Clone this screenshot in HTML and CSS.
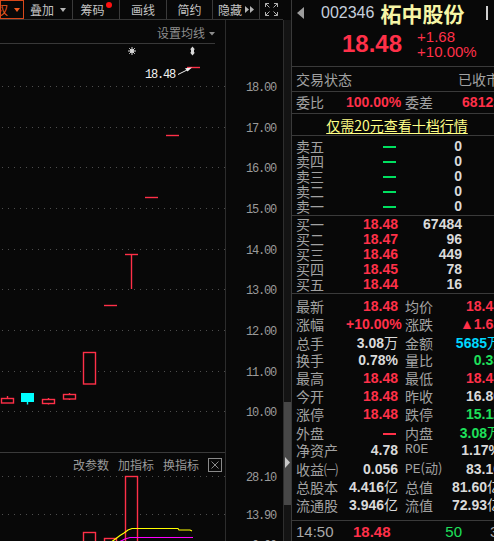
FILE: index.html
```html
<!DOCTYPE html>
<html lang="zh-CN">
<head>
<meta charset="utf-8">
<title>柘中股份 002346</title>
<link rel="stylesheet" href="styles.css">
</head>
<body>
<div class="app">
  <section class="left">
    <nav class="toolbar">
      <div class="btn btn-active"><span class="btn-txt">复权</span><span class="caret caret-or"></span></div>
      <div class="btn b-overlay"><span>叠加</span><span class="caret"></span></div>
      <div class="btn b-chip"><span>筹码</span><span class="dot"></span></div>
      <div class="btn b-draw"><span>画线</span></div>
      <div class="btn b-simple"><span>简约</span></div>
      <div class="btn b-hide"><span>隐藏</span>
        <svg class="ff" width="9" height="7" viewBox="0 0 9 7"><polygon points="0,0 4,3.5 0,7" fill="#b4b4b4"/><polygon points="5,0 9,3.5 5,7" fill="#b4b4b4"/></svg>
      </div>
      <div class="btn b-full">
        <svg width="13" height="13" viewBox="0 0 13 13" fill="none" stroke="#b0b0b0" stroke-width="1">
          <path d="M0.5 4V0.5H4M0.5 0.5L4.5 4.5"/>
          <path d="M9 0.5H12.5V4M12.5 0.5L8.5 4.5"/>
          <path d="M0.5 9V12.5H4M0.5 12.5L4.5 8.5"/>
          <path d="M9 12.5H12.5V9M12.5 12.5L8.5 8.5"/>
        </svg>
      </div>
    </nav>
    <div class="chartrow">
      <svg class="chart" width="283" height="521" viewBox="0 20 283 521">
        <g class="hdr">
          <line x1="0" y1="43.5" x2="215" y2="43.5" stroke="#383838"/>
          <text x="157" y="37.5" class="t-set">设置均线</text>
          <polygon points="209,32 215,32 212,35.5" fill="#8c8c8c"/>
        </g>
        <line x1="225.5" y1="20" x2="225.5" y2="541" stroke="#2c2c2c"/>
        <g class="grid" stroke="#4e4e4e" stroke-dasharray="1 5">
          <line x1="2" y1="86.5" x2="228" y2="86.5"/>
          <line x1="2" y1="127.5" x2="228" y2="127.5"/>
          <line x1="2" y1="167.5" x2="228" y2="167.5"/>
          <line x1="2" y1="208.5" x2="228" y2="208.5"/>
          <line x1="2" y1="249.5" x2="228" y2="249.5"/>
          <line x1="2" y1="289.5" x2="228" y2="289.5"/>
          <line x1="2" y1="330.5" x2="228" y2="330.5"/>
          <line x1="2" y1="371.5" x2="228" y2="371.5"/>
          <line x1="2" y1="411.5" x2="228" y2="411.5"/>
          <line x1="2" y1="476.5" x2="228" y2="476.5"/>
          <line x1="2" y1="514.5" x2="228" y2="514.5"/>
        </g>
        <g class="axis">
          <text x="276" y="90.5">18.00</text>
          <text x="276" y="131.5">17.00</text>
          <text x="276" y="171.5">16.00</text>
          <text x="276" y="212.5">15.00</text>
          <text x="276" y="253.5">14.00</text>
          <text x="276" y="293.5">13.00</text>
          <text x="276" y="334.5">12.00</text>
          <text x="276" y="375.5">11.00</text>
          <text x="276" y="415.5">10.00</text>
          <text x="276" y="480.5">28.10</text>
          <text x="276" y="518.5">13.90</text>
          <text x="276" y="548.5">0.00</text>
        </g>
        <g class="marks" fill="#d8d8d8" stroke="#d8d8d8">
          <circle cx="132" cy="51" r="2" stroke="none"/>
          <path d="M132 47V55M128 51H136M129.2 48.2L134.8 53.8M134.8 48.2L129.2 53.8" stroke-width="1"/>
          <polygon points="192.5,46.5 195,49.5 194,49.5 194,52.5 195,52.5 192.5,55.5 190,52.5 191,52.5 191,49.5 190,49.5" stroke="none"/>
        </g>
        <g class="candles" stroke="#ff3048" stroke-width="1.4" fill="#080808">
          <line x1="7.5" y1="396" x2="7.5" y2="398"/>
          <rect x="1.5" y="398.5" width="12" height="4.5"/>
          <line x1="27.5" y1="401" x2="27.5" y2="404.5" stroke="#00ffff"/>
          <rect x="21" y="393" width="13" height="9" fill="#00ffff" stroke="none"/>
          <line x1="48.5" y1="398" x2="48.5" y2="404.5"/>
          <rect x="42.5" y="399.5" width="12" height="4"/>
          <line x1="69.5" y1="393" x2="69.5" y2="400"/>
          <rect x="63.5" y="394.5" width="12" height="4.5"/>
          <rect x="83.5" y="352.5" width="12" height="31.5"/>
          <line x1="104" y1="305.5" x2="117" y2="305.5"/>
          <line x1="125" y1="254.5" x2="138" y2="254.5"/>
          <line x1="131.5" y1="254.5" x2="131.5" y2="289"/>
          <line x1="145" y1="197.5" x2="158" y2="197.5"/>
          <line x1="166" y1="135.5" x2="179" y2="135.5"/>
          <line x1="187" y1="67.5" x2="200" y2="67.5"/>
        </g>
        <g class="note">
          <text x="145" y="77.5" class="t-note">18.48</text>
          <line x1="178" y1="74.5" x2="189" y2="69" stroke="#f0f0f0" stroke-width="1"/>
          <polygon points="192,67.5 185,68.2 187.5,71.5" fill="#f0f0f0"/>
        </g>
        <line x1="0" y1="452.5" x2="225" y2="452.5" stroke="#3a3a3a"/>
        <g class="ind">
          <text x="73" y="469.5" class="t-ind">改参数</text>
          <text x="118" y="469.5" class="t-ind">加指标</text>
          <text x="163" y="469.5" class="t-ind">换指标</text>
          <rect x="208.5" y="458.5" width="13" height="13" fill="none" stroke="#8a8a8a"/>
          <path d="M211.5 461.5L218.5 468.5M218.5 461.5L211.5 468.5" stroke="#8a8a8a"/>
        </g>
        <g class="vol" stroke="#ff3048" stroke-width="1.4" fill="#080808">
          <rect x="125.5" y="476.5" width="12" height="80"/>
          <rect x="83.5" y="532.5" width="12" height="20"/>
          <rect x="104.5" y="538.5" width="12" height="20"/>
        </g>
        <polyline points="112,541.5 116,538.5 120,535.5 124,533 128,530 132,528.5 178,528.5 179,530 190,530 192,531" fill="none" stroke="#ffff00" stroke-width="1.2"/>
        <polyline points="120,541.5 125,539 130,537.5 193,537.5" fill="none" stroke="#ff00ff" stroke-width="1.2"/>
      </svg>
      <div class="scroll">
        <div class="thumb">
          <svg class="thumb-arrow" width="5" height="11" viewBox="0 0 5 11"><polygon points="0,0 5,5.5 0,11" fill="#c8c8c8"/></svg>
        </div>
      </div>
    </div>
  </section>

  <section class="panel">
    <header class="ph">
      <div class="ph-top">
        <svg class="back" width="7" height="12" viewBox="0 0 7 12"><polygon points="7,0 7,12 0,6" fill="#9c9c9c"/></svg>
        <span class="code">002346</span>
        <span class="name">柘中股份</span>
        <span class="edge"></span>
      </div>
      <div class="ph-price">
        <span class="big up">18.48</span>
        <div class="chg up"><span>+1.68</span><span>+10.00%</span></div>
      </div>
    </header>

    <div class="status-row"><span class="lab">交易状态</span><span class="lab status">已收市</span></div>

    <div class="g4 wb-row">
      <span class="lab">委比</span><span class="num up">100.00%</span>
      <span class="lab l2">委差</span><span class="num up">68123</span>
    </div>

    <div class="promo"><span class="promo-link">仅需20元查看十档行情</span></div>

    <div class="book sell">
      <div class="brow"><span class="lab">卖五</span><span class="num"><i class="dash"></i></span><span class="num wt">0</span></div>
      <div class="brow"><span class="lab">卖四</span><span class="num"><i class="dash"></i></span><span class="num wt">0</span></div>
      <div class="brow"><span class="lab">卖三</span><span class="num"><i class="dash"></i></span><span class="num wt">0</span></div>
      <div class="brow"><span class="lab">卖二</span><span class="num"><i class="dash"></i></span><span class="num wt">0</span></div>
      <div class="brow"><span class="lab">卖一</span><span class="num"><i class="dash"></i></span><span class="num wt">0</span></div>
    </div>

    <div class="book buy">
      <div class="brow"><span class="lab">买一</span><span class="num up">18.48</span><span class="num wt">67484</span></div>
      <div class="brow"><span class="lab">买二</span><span class="num up">18.47</span><span class="num wt">96</span></div>
      <div class="brow"><span class="lab">买三</span><span class="num up">18.46</span><span class="num wt">449</span></div>
      <div class="brow"><span class="lab">买四</span><span class="num up">18.45</span><span class="num wt">78</span></div>
      <div class="brow"><span class="lab">买五</span><span class="num up">18.44</span><span class="num wt">16</span></div>
    </div>

    <div class="info">
      <div class="g4 irow"><span class="lab">最新</span><span class="num up">18.48</span><span class="lab l2">均价</span><span class="num up">18.48</span></div>
      <div class="g4 irow"><span class="lab">涨幅</span><span class="num up">+10.00%</span><span class="lab l2">涨跌</span><span class="num up">▲1.68</span></div>
      <div class="g4 irow"><span class="lab">总手</span><span class="num wt">3.08<span class="cjk">万</span></span><span class="lab l2">金额</span><span class="num cy">5685<span class="cjk">万</span></span></div>
      <div class="g4 irow"><span class="lab">换手</span><span class="num wt">0.78%</span><span class="lab l2">量比</span><span class="num dn">0.35</span></div>
      <div class="g4 irow"><span class="lab">最高</span><span class="num up">18.48</span><span class="lab l2">最低</span><span class="num up">18.48</span></div>
      <div class="g4 irow"><span class="lab">今开</span><span class="num up">18.48</span><span class="lab l2">昨收</span><span class="num wt">16.80</span></div>
      <div class="g4 irow"><span class="lab">涨停</span><span class="num up">18.48</span><span class="lab l2">跌停</span><span class="num dn">15.12</span></div>
      <div class="g4 irow"><span class="lab">外盘</span><span class="num"><i class="dash red"></i></span><span class="lab l2">内盘</span><span class="num dn">3.08<span class="cjk">万</span></span></div>
      <div class="g4 irow"><span class="lab">净资产</span><span class="num wt">4.78</span><span class="mono l2">ROE</span><span class="num wt">1.17%</span></div>
      <div class="g4 irow"><span class="lab">收益㈠</span><span class="num wt">0.056</span><span class="mono l2">PE<span class="cjk-s">(动)</span></span><span class="num wt">83.16</span></div>
      <div class="g4 irow"><span class="lab">总股本</span><span class="num wt">4.416<span class="cjk">亿</span></span><span class="lab l2">总值</span><span class="num wt">81.60<span class="cjk">亿</span></span></div>
      <div class="g4 irow"><span class="lab">流通股</span><span class="num wt">3.946<span class="cjk">亿</span></span><span class="lab l2">流值</span><span class="num wt">72.93<span class="cjk">亿</span></span></div>
    </div>

    <div class="tick">
      <span class="t-time">14:50</span><span class="t-price up">18.48</span><span class="t-vol dn">50</span><span class="t-n">3</span>
    </div>
  </section>
</div>
</body>
</html>
```

FILE: styles.css
```css
html, body {
  margin: 0;
  padding: 0;
  overflow: hidden;
  background: #080808;
}
body {
  width: 494px;
  height: 541px;
  font-family: "Noto Sans CJK SC", "Liberation Sans", sans-serif;
  color: #a4a4a4;
}
.app {
  display: flex;
  width: 503px;
  height: 541px;
}

/* ---------- left: chart ---------- */
.left {
  flex: none;
  width: 291px;
  display: flex;
  flex-direction: column;
}
.toolbar {
  display: flex;
  width: 283px;
  height: 19px;
  border-bottom: 1px solid #363636;
}
.btn {
  box-sizing: border-box;
  height: 19px;
  display: flex;
  align-items: center;
  justify-content: center;
  border-right: 1px solid #3a3a3a;
  color: #c4c4c4;
  font-size: 12px;
  line-height: 19px;
  white-space: nowrap;
  flex: none;
}
.caret {
  width: 0;
  height: 0;
  border-left: 3px solid transparent;
  border-right: 3px solid transparent;
  border-top: 4px solid #b4b4b4;
  margin-left: 6px;
}
.btn-active {
  width: 24px;
  justify-content: flex-end;
  overflow: hidden;
  border: 1px solid #d8481a;
  padding-right: 3px;
  color: #f25a20;
}
.btn-active .caret { margin-left: 6px; }
.caret-or { border-top-color: #f25a20; }
.b-overlay { width: 49px; }
.b-chip { width: 47px; align-items: center; }
.b-draw { width: 47px; }
.b-simple { width: 46px; }
.b-hide { width: 47px; }
.b-full { width: 23px; border-right: none; }
.dot {
  width: 6px;
  height: 6px;
  border-radius: 50%;
  background: #ff1010;
  margin-left: 1px;
  align-self: flex-start;
  margin-top: 2px;
}
.ff { margin-left: 3px; }

.chartrow {
  display: flex;
  flex: 1;
}
.chart {
  display: block;
  flex: none;
}
.chart text {
  font-family: "Liberation Mono", monospace;
  font-size: 12px;
  letter-spacing: -1.2px;
}
.axis text {
  fill: #9a9a9a;
  text-anchor: end;
}
.chart .t-set, .chart .t-ind {
  font-family: "Noto Sans CJK SC", sans-serif;
  font-size: 12px;
  letter-spacing: 0;
  fill: #8e8e8e;
}
.chart .t-ind { fill: #9a9a9a; }
.chart .t-note { fill: #f2f2f2; }

.scroll {
  box-sizing: border-box;
  width: 8px;
  background: #141414;
  border-left: 1px solid #2e2e2e;
  display: flex;
  flex-direction: column;
}
.thumb {
  margin-top: 382px;
  height: 103px;
  background: #474747;
  display: flex;
  align-items: center;
  justify-content: center;
}
.thumb-arrow { display: block; margin-top: 18px; }

/* ---------- right: quote panel ---------- */
.panel {
  box-sizing: border-box;
  flex: none;
  width: 212px;
  border-left: 1px solid #3a3a3a;
  display: flex;
  flex-direction: column;
}
.up { color: #ff3048; }
.dn { color: #1ee05a; }
.wt { color: #dadada; }
.cy { color: #00d8ff; }

.ph {
  height: 66px;
  border-bottom: 1px solid #3a3a3a;
  display: flex;
  flex-direction: column;
}
.ph-top {
  height: 26px;
  display: flex;
  align-items: center;
  white-space: nowrap;
}
.back { margin-left: 5px; flex: none; }
.code {
  margin-left: 17px;
  font-family: "Liberation Sans", sans-serif;
  font-size: 16px;
  color: #c4cedc;
}
.name {
  margin-left: 6px;
  font-size: 21px;
  font-weight: bold;
  color: #f6f6a6;
  line-height: 26px;
}
.edge {
  width: 2px;
  height: 14px;
  background: #cfcfcf;
  margin-left: 22px;
}
.ph-price {
  height: 40px;
  display: flex;
  align-items: center;
}
.big {
  margin-left: 50px;
  font-family: "Liberation Sans", sans-serif;
  font-weight: bold;
  font-size: 24px;
  line-height: 24px;
  margin-top: -4px;
}
.chg {
  margin-left: 15px;
  display: flex;
  flex-direction: column;
  font-family: "Liberation Sans", sans-serif;
  font-size: 15px;
  line-height: 15px;
  margin-top: -4px;
}

.lab {
  font-size: 14px;
  color: #a2a2a2;
  white-space: nowrap;
}
.num {
  font-family: "Liberation Sans", sans-serif;
  font-weight: bold;
  font-size: 14px;
  text-align: right;
  white-space: nowrap;
}
.cjk {
  font-family: "Noto Sans CJK SC", sans-serif;
  font-weight: normal;
}
.mono {
  font-family: "Liberation Mono", monospace;
  font-size: 13px;
  color: #a2a2a2;
  white-space: nowrap;
}
.cjk-s {
  font-family: "Noto Sans CJK SC", sans-serif;
  font-size: 13px;
}

.status-row {
  height: 24px;
  line-height: 24px;
  display: flex;
  justify-content: space-between;
  padding: 0 3px 0 4px;
  border-bottom: 1px solid #3a3a3a;
}

.g4 {
  display: grid;
  grid-template-columns: 50px 52px 53px 50px;
  padding-left: 4px;
  align-items: center;
}
.g4 .l2 { padding-left: 7px; }

.wb-row {
  height: 21px;
  line-height: 21px;
  border-bottom: 1px solid #3a3a3a;
}

.promo {
  height: 21px;
  line-height: 21px;
  border-bottom: 1px solid #3a3a3a;
  text-align: center;
  padding-right: 1px;
}
.promo-link {
  font-size: 14px;
  color: #ffff86;
  text-decoration: underline;
  text-underline-offset: 2px;
}

.book {
  border-bottom: 1px solid #3a3a3a;
}
.sell { padding: 3px 0 1px; }
.buy { padding: 1px 0 1px; }
.brow {
  display: grid;
  grid-template-columns: 50px 52px 64px;
  padding-left: 4px;
  height: 15px;
  line-height: 15px;
  align-items: center;
}
.dash {
  display: inline-block;
  width: 13px;
  height: 2px;
  background: #00e060;
  vertical-align: middle;
  margin-right: 2px;
}
.dash.red { background: #ff3048; }

.info {
  padding: 3px 0 7px;
  border-bottom: 1px solid #3a3a3a;
}
.irow {
  height: 18px;
  line-height: 18px;
}

.tick {
  height: 22px;
  display: grid;
  grid-template-columns: 57px 60px 49px auto;
  padding-left: 4px;
  align-items: center;
  font-family: "Liberation Sans", sans-serif;
  font-size: 15px;
  white-space: nowrap;
}
.t-time { color: #a8a8a8; }
.t-price { font-weight: bold; }
.t-vol { text-align: right; }
.t-n { padding-left: 28px; color: #a8a8a8; }
```
